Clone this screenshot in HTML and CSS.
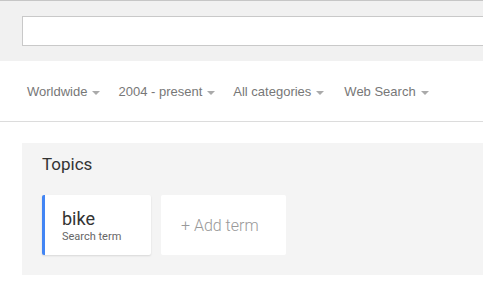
FILE: index.html
```html
<!DOCTYPE html>
<html lang="en">
<head>
    <meta charset="UTF-8">
    <meta name="viewport" content="width=device-width, initial-scale=1.0">
    <title>Explore</title>
    <link rel="stylesheet" href="styles.css">
</head>
<body>
    <div class="header">
        <input type="text" class="search-input">
    </div>

    <div class="filters">
        <span class="filter">Worldwide<i class="caret"></i></span>
        <span class="filter">2004 - present<i class="caret"></i></span>
        <span class="filter">All categories<i class="caret"></i></span>
        <span class="filter">Web Search<i class="caret"></i></span>
    </div>

    <div class="topics">
        <h2>Topics</h2>
        <div class="terms">
            <div class="term-card active">
                <div class="term-name">bike</div>
                <div class="term-type">Search term</div>
            </div>
            <div class="term-card add">+ Add term</div>
        </div>
    </div>
</body>
</html>
```

FILE: styles.css
```css
body {
    margin: 0;
    font-family: Roboto, Arial, sans-serif;
    background: #fff;
    overflow: hidden;
}
.header {
    height: 61px;
    background-color: #f1f1f1;
    border-top: 1px solid #c6c6c6;
    padding: 15px 0 0 22px;
    box-sizing: border-box;
    overflow: hidden;
}
.search-input {
    display: block;
    width: 520px;
    height: 30px;
    box-sizing: border-box;
    border: 1px solid #c9c9c9;
    background: #fff;
    margin: 0;
    padding: 0 8px;
    outline: none;
}
.filters {
    display: flex;
    align-items: center;
    height: 61px;
    padding-left: 27px;
    border-bottom: 1px solid #dcdcdc;
    box-sizing: border-box;
    font-family: "Liberation Sans", Arial, sans-serif;
    font-size: 13px;
    color: #777;
}
.filter {
    display: flex;
    align-items: center;
    margin-right: 18px;
}
.filter:nth-child(3) {
    margin-right: 20px;
}
.caret {
    display: inline-block;
    width: 0;
    height: 0;
    margin-left: 5px;
    margin-top: 3px;
    border-left: 4px solid transparent;
    border-right: 4px solid transparent;
    border-top: 4px solid #aaa;
}
.topics {
    margin: 21px 0 14px 22px;
    background-color: #f4f4f4;
    padding: 10px 20px 20px 20px;
    height: 132px;
    box-sizing: border-box;
}
.topics h2 {
    margin: 0;
    font-size: 17px;
    font-weight: 400;
    line-height: 22px;
    color: #333;
}
.terms {
    display: flex;
    gap: 10px;
    margin-top: 20px;
}
.term-card {
    height: 60px;
    background: #fff;
    border-radius: 2px;
    box-sizing: border-box;
}
.term-card.active {
    width: 109px;
    border-left: 3px solid #4285f4;
    padding: 13px 0 0 17px;
    box-shadow: 0 1px 2px rgba(0, 0, 0, 0.12);
}
.term-name {
    font-size: 18px;
    line-height: 22px;
    color: #333;
}
.term-type {
    font-size: 11px;
    line-height: 14px;
    color: #666;
}
.term-card.add {
    width: 125px;
    display: flex;
    align-items: center;
    padding-left: 20px;
    font-size: 16px;
    font-weight: 300;
    color: #999;
}
```
